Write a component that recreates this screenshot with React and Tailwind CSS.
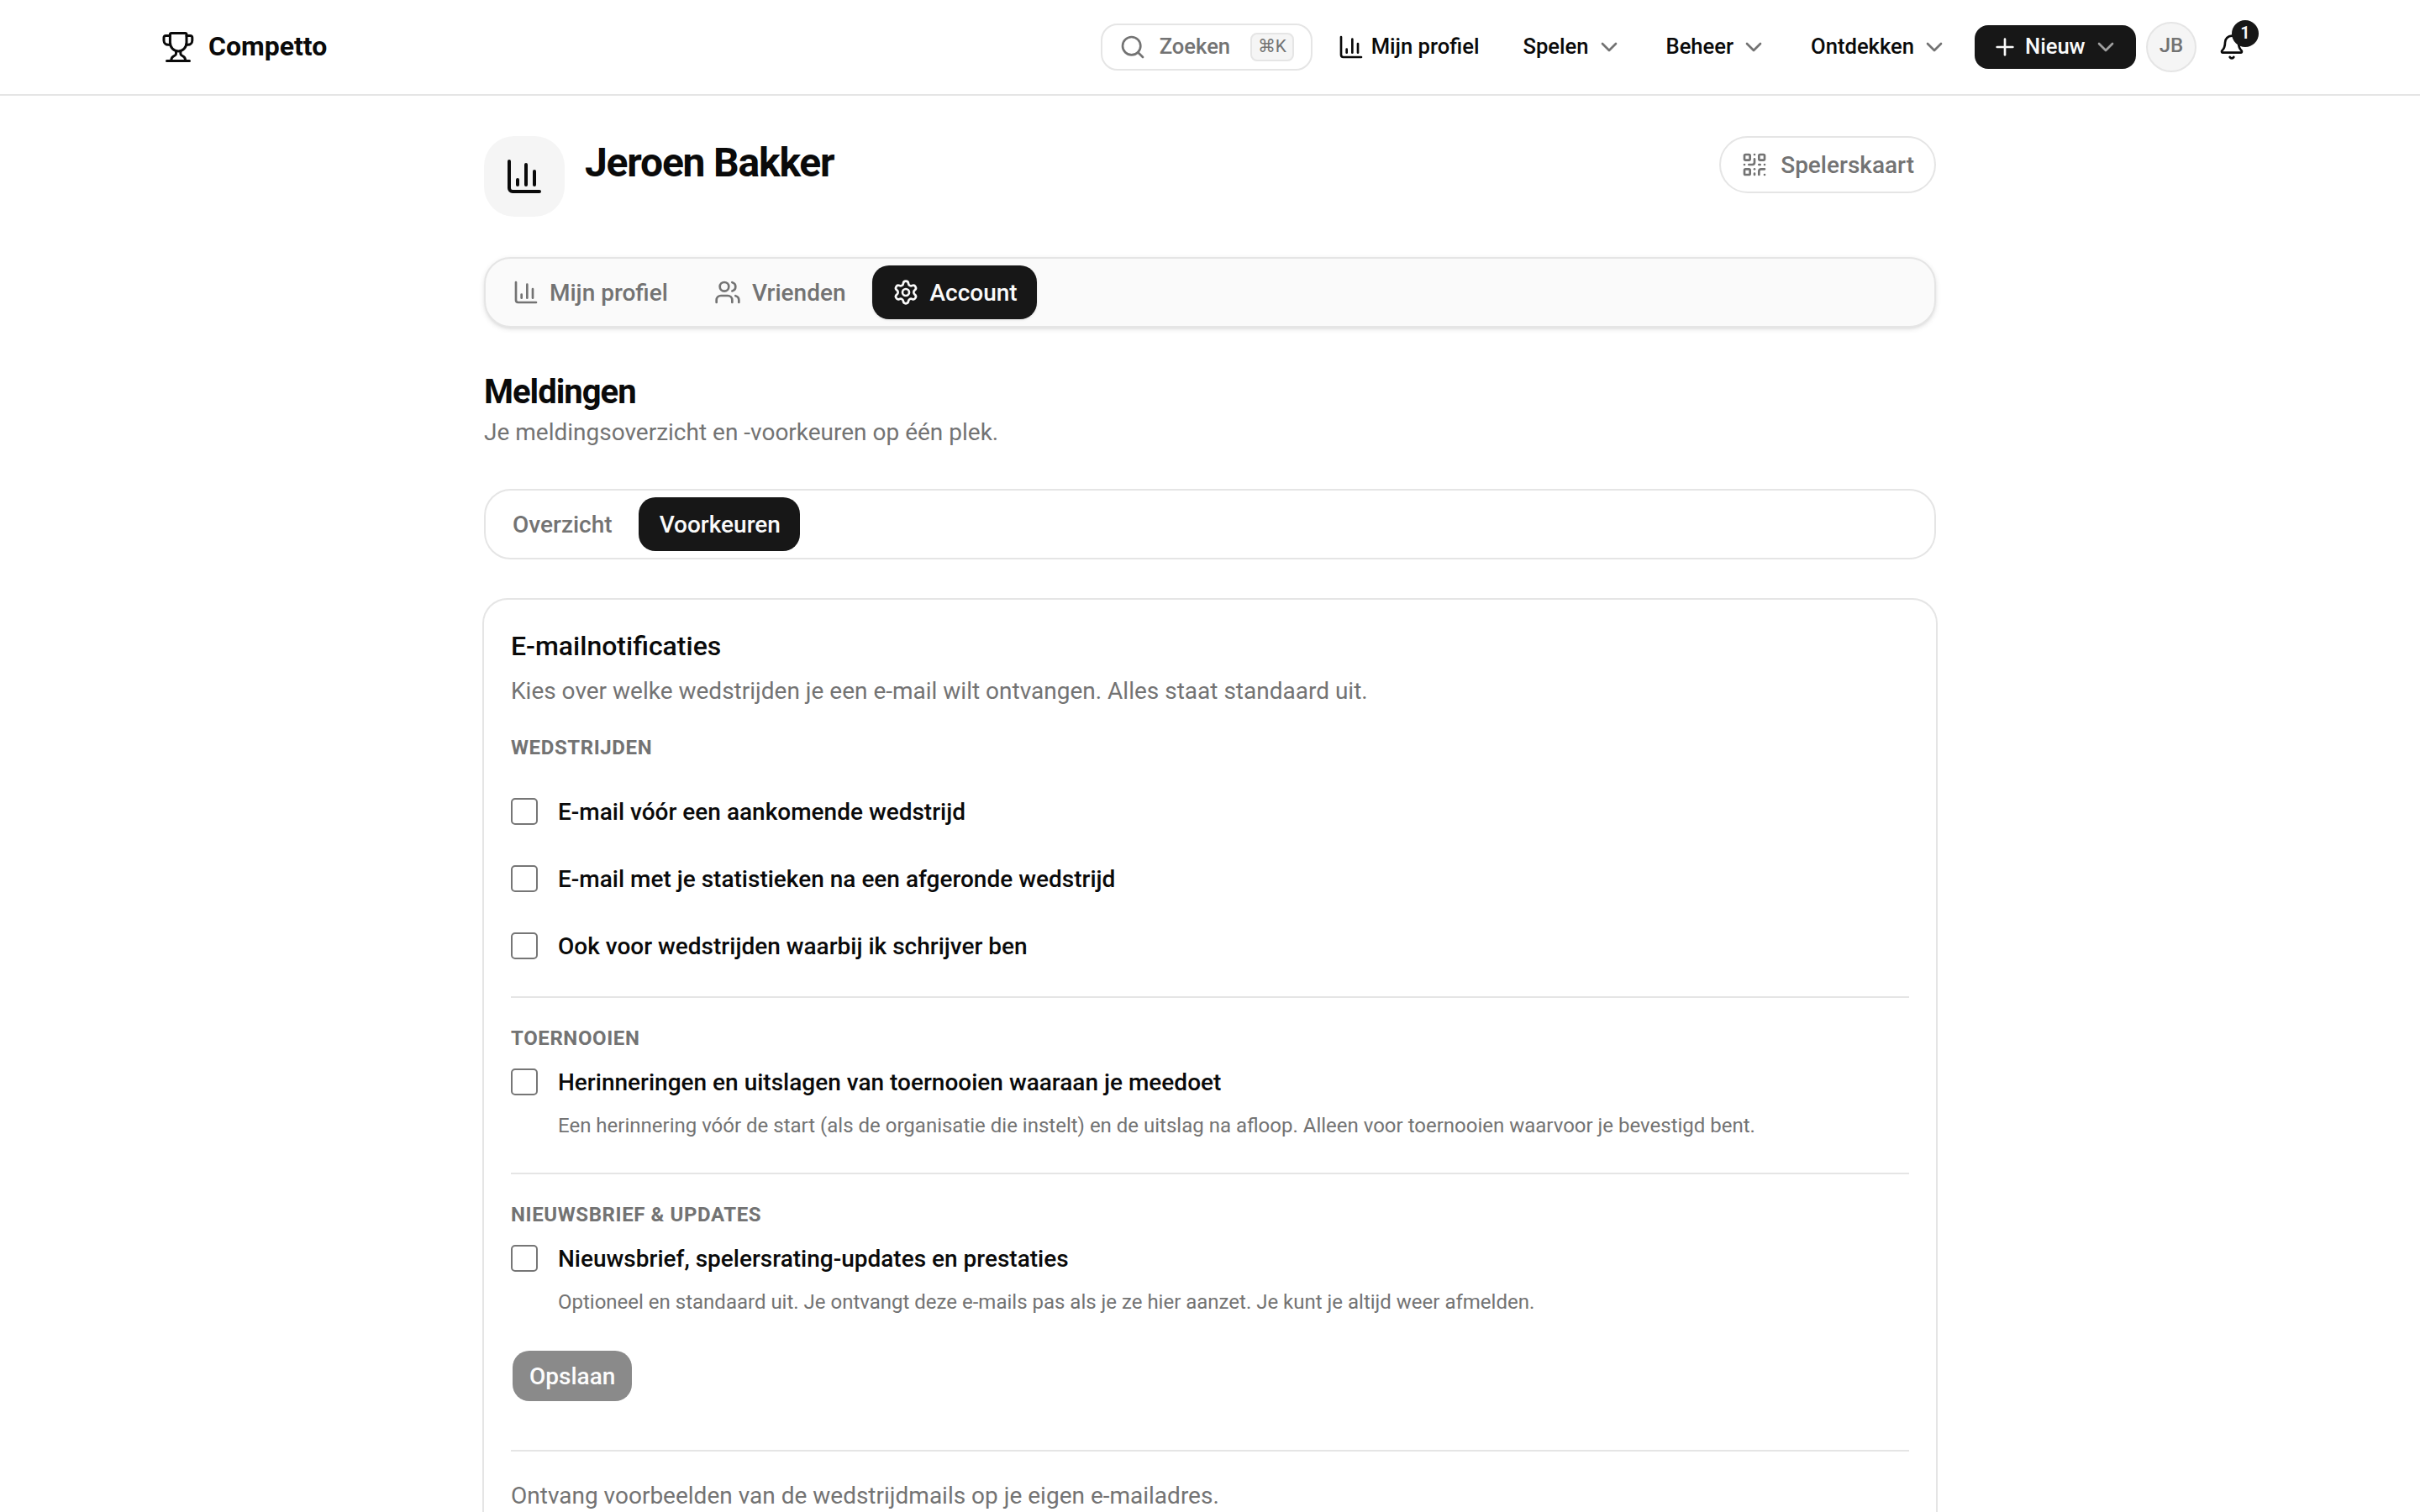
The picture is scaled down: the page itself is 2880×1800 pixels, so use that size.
import React, { useState } from 'react';
import { Bell, ChartColumn, ChevronDown, Plus, QrCode, Search, Settings, Users } from 'lucide-react';

const navItems = ['Spelen', 'Beheer', 'Ontdekken'];

const profileTabs = [
  { id: 'profiel', label: 'Mijn profiel', icon: ChartColumn },
  { id: 'vrienden', label: 'Vrienden', icon: Users },
  { id: 'account', label: 'Account', icon: Settings },
];

const matchOptions = [
  'E-mail vóór een aankomende wedstrijd',
  'E-mail met je statistieken na een afgeronde wedstrijd',
  'Ook voor wedstrijden waarbij ik schrijver ben',
];

function TrophyLogo() {
  return (
    <svg width="40" height="40" viewBox="0 0 40 40" fill="none" stroke="currentColor" strokeWidth="3" strokeLinecap="round" strokeLinejoin="round">
      <path d="M12 3.4h16.4a1.6 1.6 0 0 1 1.6 1.6v9.5c0 6-4.4 10.4-9.8 10.4s-9.8-4.4-9.8-10.4V5a1.6 1.6 0 0 1 1.6-1.6z" />
      <path d="M10.4 6.5H5.2a2.2 2.2 0 0 0-2.2 2.2v3.6c0 2.8 2.4 5 5.2 5h2.4" />
      <path d="M30 6.5h4.6a2.2 2.2 0 0 1 2.2 2.2v3.6c0 2.8-2.4 5-5.2 5h-2" />
      <path d="M17.5 25v3c0 1.2-.8 2-1.9 2.4-2 .8-3.9 2.4-3.9 6.2" />
      <path d="M22.9 25v3c0 1.2.8 2 1.9 2.4 2 .8 3.9 2.4 3.9 6.2" />
      <path d="M6.5 36.6h27" />
    </svg>
  );
}

function Header() {
  return (
    <header className="h-[114px] shrink-0 border-b-2 border-neutral-200 bg-white">
      <div className="mx-auto flex h-full max-w-[2560px] items-center justify-between px-8">
        <div className="flex items-center gap-4">
          <TrophyLogo />
          <span className="pb-0.5 text-[32px] font-bold">Competto</span>
        </div>

        <div className="flex items-center text-[25.6px] font-medium">
          <button className="flex h-14 w-[252px] items-center rounded-[20px] border-2 border-neutral-200 pl-5 text-neutral-500">
            <Search size={32} />
            <span className="ml-4 pb-0.5">Zoeken</span>
            <kbd className="mr-5 ml-auto flex h-[34px] w-[52px] items-center justify-center rounded-lg border-2 border-neutral-200 bg-neutral-100 font-[Roboto] text-[20.8px] font-normal">⌘K</kbd>
          </button>

          <a className="ml-[30px] flex items-center gap-2">
            <ChartColumn size={32} />
            <span className="pb-0.5">Mijn profiel</span>
          </a>

          <nav className="ml-[52px] flex gap-[52px]">
            {navItems.map((item) => (
              <a key={item} className="flex items-center gap-2">
                <span className="pb-0.5">{item}</span>
                <ChevronDown size={32} className="text-neutral-500" />
              </a>
            ))}
          </nav>

          <button className="ml-8 flex h-[52px] w-48 items-center rounded-2xl bg-neutral-900 pl-5 text-neutral-50">
            <Plus size={32} />
            <span className="ml-2 pb-0.5">Nieuw</span>
            <ChevronDown size={32} className="mr-5 ml-auto opacity-60" />
          </button>

          <div className="ml-3 flex size-[60px] items-center justify-center rounded-full border-2 border-neutral-200 bg-neutral-100 pb-1 text-[24px] text-neutral-500">
            JB
          </div>

          <button className="relative ml-[26px] mr-4">
            <Bell size={32} />
            <span className="absolute -right-4 -top-4 flex size-8 items-center justify-center rounded-full bg-neutral-900 pb-0.5 text-[20px] leading-none font-semibold text-neutral-50">1</span>
          </button>
        </div>
      </div>
    </header>
  );
}

function CheckRow({ label, checked, onChange }) {
  return (
    <label className="flex h-8 items-center gap-6 text-[28px] font-medium">
      <input
        type="checkbox"
        checked={checked}
        onChange={onChange}
        className="size-8 appearance-none rounded-[5px] border-2 border-[#767676] bg-white checked:bg-neutral-900"
      />
      <span className="pt-0.5">{label}</span>
    </label>
  );
}

function SectionTitle({ children }) {
  return <h3 className="text-[24px] leading-8 font-bold tracking-[0.6px] text-neutral-500 uppercase">{children}</h3>;
}

export default function App() {
  const [tab, setTab] = useState('account');
  const [subTab, setSubTab] = useState('Voorkeuren');
  const [prefs, setPrefs] = useState({});

  const toggle = (key) => setPrefs({ ...prefs, [key]: !prefs[key] });

  return (
    <div className="flex h-[1800px] flex-col overflow-hidden bg-white font-[Roboto,sans-serif] text-neutral-950">
      <Header />

      <main className="mx-auto w-[1728px] pt-12">
        <div className="flex h-24 items-start justify-between">
          <div className="flex gap-6">
            <div className="flex size-24 items-center justify-center rounded-[36px] bg-neutral-100">
              <ChartColumn size={48} />
            </div>
            <h1 className="text-[48px] leading-[64px] font-bold tracking-[-1.2px]">Jeroen Bakker</h1>
          </div>
          <button className="flex h-[68px] items-center gap-[15px] rounded-full border-2 border-neutral-200 px-6 text-[28px] font-medium text-neutral-500">
            <QrCode size={32} />
            <span className="pt-0.5">Spelerskaart</span>
          </button>
        </div>

        <div className="mt-12 flex h-[84px] gap-2 rounded-[32px] border-2 border-neutral-200 bg-neutral-50 p-2 shadow-[0_2px_6px_rgba(0,0,0,0.1),0_2px_4px_-2px_rgba(0,0,0,0.1)]">
          {profileTabs.map(({ id, label, icon: Icon }, i) => (
            <button
              key={id}
              onClick={() => setTab(id)}
              className={`flex h-16 items-center gap-3 rounded-[20px] pr-[23px] pl-6 text-[28px] font-medium ${tab === id ? 'bg-neutral-900 text-neutral-50 shadow' : 'text-neutral-500'}`}
            >
              <Icon size={32} />
              <span className={i > 0 ? 'pt-0.5 pl-px' : 'pt-0.5'}>{label}</span>
            </button>
          ))}
        </div>

        <h2 className="mt-[53px] text-[40px] leading-[48px] font-bold tracking-[-1px]">Meldingen</h2>
        <p className="mt-1 text-[28px] leading-10 text-neutral-500">Je meldingsoverzicht en -voorkeuren op één plek.</p>

        <div className="mt-[47px] flex h-[84px] gap-2 rounded-[32px] border-2 border-neutral-200 p-2">
          {['Overzicht', 'Voorkeuren'].map((item, i) => (
            <button
              key={item}
              onClick={() => setSubTab(item)}
              className={`flex h-16 items-center rounded-[20px] pr-[23px] pl-6 text-[28px] font-medium ${subTab === item ? 'bg-neutral-900 text-neutral-50' : 'text-neutral-500'}`}
            >
              <span className={i > 0 ? 'pt-0.5 pl-px' : 'pt-0.5'}>{item}</span>
            </button>
          ))}
        </div>

        <section className="mt-12 h-[1200px] rounded-[28px] px-8 pt-[31px] ring-2 ring-neutral-200">
          <h3 className="text-[32px] leading-[48px] font-medium">E-mailnotificaties</h3>
          <p className="mt-2.5 text-[28px] leading-10 text-neutral-500">
            Kies over welke wedstrijden je een e-mail wilt ontvangen. Alles staat standaard uit.
          </p>

          <div className="mt-[31px]">
            <SectionTitle>Wedstrijden</SectionTitle>
            <div className="mt-11 flex flex-col gap-12">
              {matchOptions.map((label) => (
                <CheckRow key={label} label={label} checked={!!prefs[label]} onChange={() => toggle(label)} />
              ))}
            </div>
          </div>

          <div className="mt-11 border-t-2 border-neutral-200 pt-8">
            <SectionTitle>Toernooien</SectionTitle>
            <div className="mt-5">
              <CheckRow
                label="Herinneringen en uitslagen van toernooien waaraan je meedoet"
                checked={!!prefs.toernooien}
                onChange={() => toggle('toernooien')}
              />
            </div>
            <p className="mt-5 pl-14 text-[24px] leading-8 text-neutral-500">
              Een herinnering vóór de start (als de organisatie die instelt) en de uitslag na afloop. Alleen voor toernooien waarvoor je bevestigd bent.
            </p>
          </div>

          <div className="mt-10 border-t-2 border-neutral-200 pt-8">
            <SectionTitle>Nieuwsbrief &amp; updates</SectionTitle>
            <div className="mt-5">
              <CheckRow
                label="Nieuwsbrief, spelersrating-updates en prestaties"
                checked={!!prefs.nieuwsbrief}
                onChange={() => toggle('nieuwsbrief')}
              />
            </div>
            <p className="mt-5 pl-14 text-[24px] leading-8 text-neutral-500">
              Optioneel en standaard uit. Je ontvangt deze e-mails pas als je ze hier aanzet. Je kunt je altijd weer afmelden.
            </p>
          </div>

          <button disabled className="mt-[42px] ml-0.5 flex h-[60px] items-center rounded-[20px] bg-neutral-900 px-5 text-[28px] font-medium text-neutral-50 opacity-50">
            <span className="pt-0.5">Opslaan</span>
          </button>

          <div className="mt-[58px] border-t-2 border-neutral-200 pt-[33px]">
            <p className="text-[28px] leading-10 text-neutral-500">Ontvang voorbeelden van de wedstrijdmails op je eigen e-mailadres.</p>
          </div>
        </section>
      </main>
    </div>
  );
}
